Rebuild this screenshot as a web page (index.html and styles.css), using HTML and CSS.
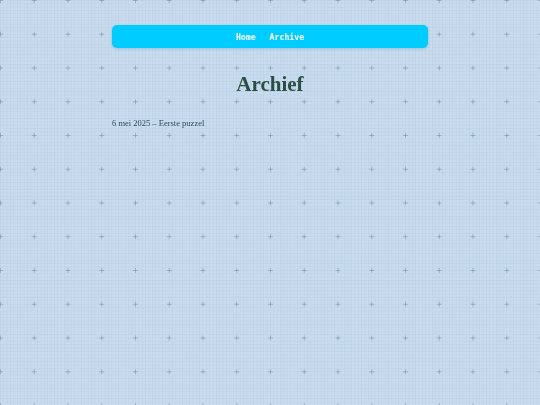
FILE: index.html
```html
<!DOCTYPE html>
<html>
<head>
<meta charset="utf-8">
<link rel="stylesheet" href="styles.css">
</head>
<body>
<div class="page">
  <nav class="nav">
    <a href="#">Home</a>
    <a href="#">Archive</a>
  </nav>
  <h1 class="title">Archief</h1>
  <p class="entry">6 mei 2025 – Eerste puzzel</p>
</div>
</body>
</html>
```
FILE: styles.css
```css
html, body {
  margin: 0;
  padding: 0;
  height: 100%;
}
body {
  background-color: #c9dcef;
  background-image:
    linear-gradient(to right, rgba(150,175,200,0.16) 1px, transparent 1px),
    linear-gradient(to bottom, rgba(150,175,200,0.16) 1px, transparent 1px);
  background-size: 3.375px 3.375px, 3.375px 3.375px;
  font-family: "Liberation Serif", serif;
}
body::before,
body::after {
  content: "";
  position: fixed;
  inset: 0;
  pointer-events: none;
}
/* horizontal arms of the plus marks */
body::before {
  background-image: linear-gradient(to bottom, rgba(105,130,155,0.45) 1px, transparent 1px);
  background-size: 100% 33.75px;
  background-position: 0 0;
  -webkit-mask-image: linear-gradient(to right, #000 5px, transparent 5px);
  mask-image: linear-gradient(to right, #000 5px, transparent 5px);
  -webkit-mask-size: 33.75px 100%;
  mask-size: 33.75px 100%;
  -webkit-mask-position: -2px 0;
  mask-position: -2px 0;
}
/* vertical arms of the plus marks */
body::after {
  background-image: linear-gradient(to right, rgba(105,130,155,0.45) 1px, transparent 1px);
  background-size: 33.75px 100%;
  background-position: 0 0;
  -webkit-mask-image: linear-gradient(to bottom, #000 5px, transparent 5px);
  mask-image: linear-gradient(to bottom, #000 5px, transparent 5px);
  -webkit-mask-size: 100% 33.75px;
  mask-size: 100% 33.75px;
  -webkit-mask-position: 0 -2px;
  mask-position: 0 -2px;
}
.page {
  width: 316px;
  margin: 0 auto;
  padding-top: 25px;
  position: relative;
  z-index: 1;
}
.nav {
  background: #00ccff;
  border-radius: 5px;
  height: 23px;
  display: flex;
  justify-content: center;
  align-items: center;
  gap: 14px;
  box-shadow: 0 1px 3px rgba(0,120,180,0.25);
}
.nav a {
  color: #ffffff;
  text-decoration: none;
  font-family: "DejaVu Sans Mono", monospace;
  font-weight: bold;
  font-size: 8.2px;
}
.title {
  margin: 22px 0 0;
  text-align: center;
  font-family: "Liberation Serif", serif;
  font-weight: bold;
  font-size: 21px;
  line-height: 28px;
  color: #2a5043;
}
.entry {
  margin: 19px 0 0;
  font-size: 8.5px;
  line-height: 12px;
  color: #2a5050;
}
```
